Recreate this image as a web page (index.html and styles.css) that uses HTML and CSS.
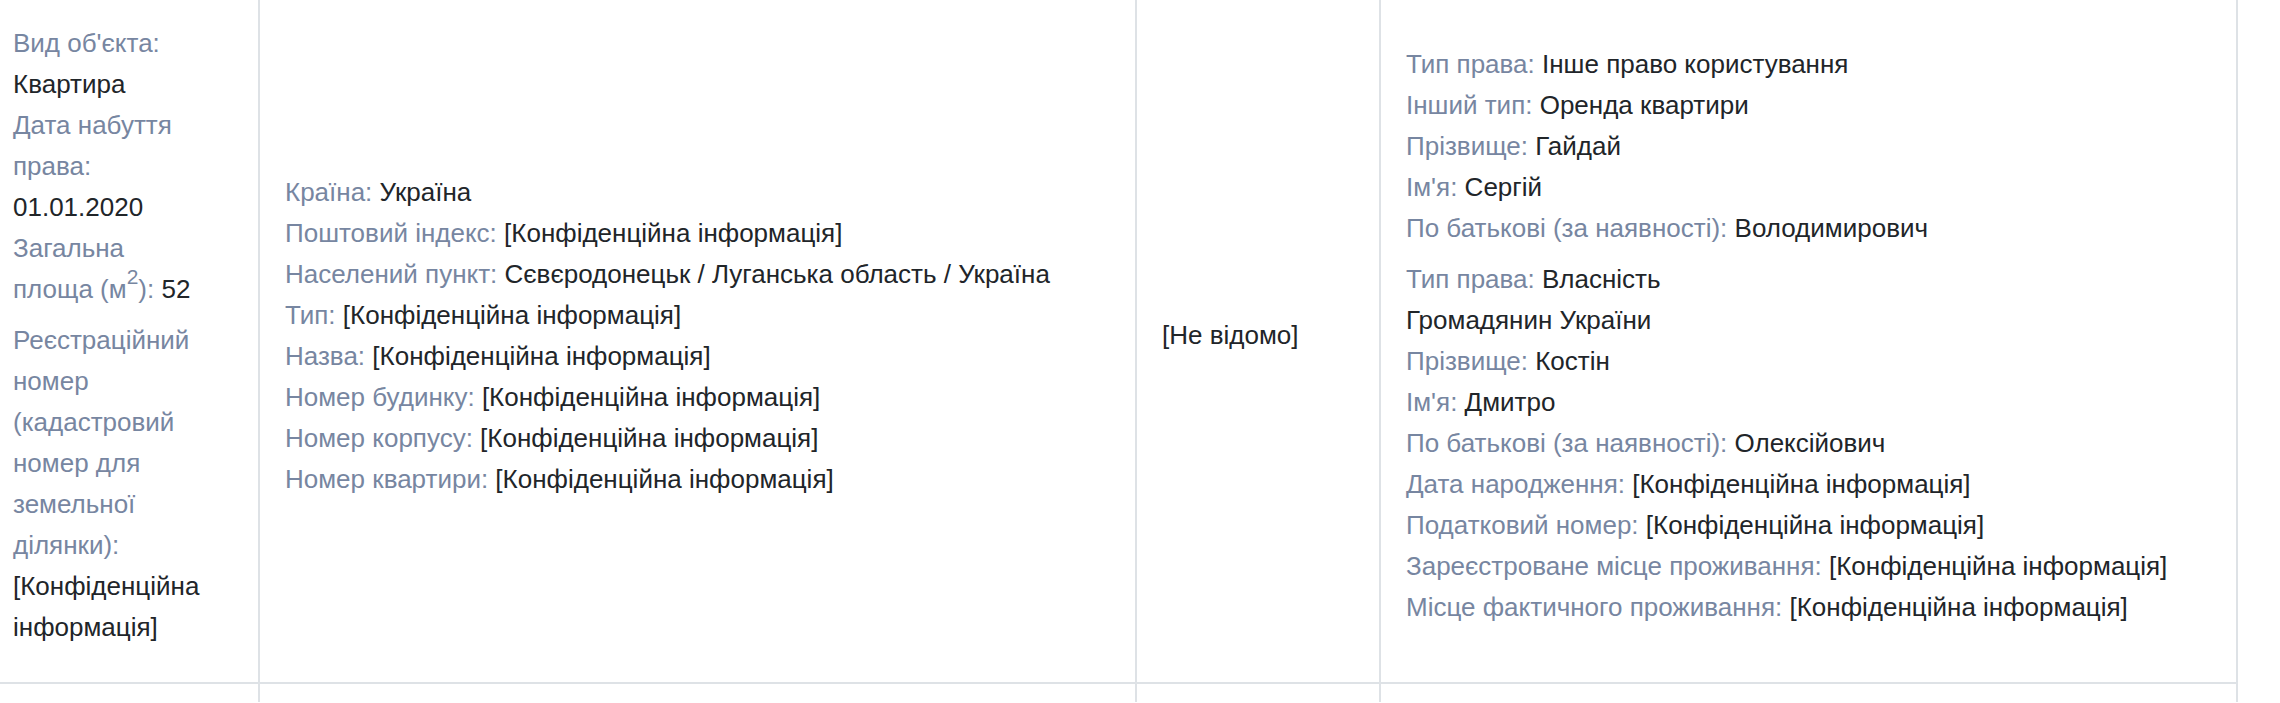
FILE: index.html
```html
<!DOCTYPE html>
<html lang="uk">
<head>
    <meta charset="UTF-8">
    <meta name="viewport" content="width=device-width, initial-scale=1.0">
    <title>Об'єкт нерухомості</title>
    <link rel="stylesheet" href="styles.css">
</head>
<body>
    <table class="record-table">
        <tr class="record-row">
            <td class="cell cell-object">
                <div class="object-info">
                    <div class="field-group">
                        <div><span class="label">Вид об'єкта:</span> Квартира</div>
                        <div><span class="label">Дата набуття права:</span> 01.01.2020</div>
                        <div><span class="label">Загальна площа (м<sup>2</sup>):</span> 52</div>
                    </div>
                    <div class="field-group">
                        <div><span class="label">Реєстраційний номер (кадастровий номер для земельної ділянки):</span> [Конфіденційна інформація]</div>
                    </div>
                </div>
            </td>
            <td class="cell cell-address">
                <div class="field-group">
                    <div><span class="label">Країна:</span> Україна</div>
                    <div><span class="label">Поштовий індекс:</span> [Конфіденційна інформація]</div>
                    <div><span class="label">Населений пункт:</span> Сєвєродонецьк / Луганська область / Україна</div>
                    <div><span class="label">Тип:</span> [Конфіденційна інформація]</div>
                    <div><span class="label">Назва:</span> [Конфіденційна інформація]</div>
                    <div><span class="label">Номер будинку:</span> [Конфіденційна інформація]</div>
                    <div><span class="label">Номер корпусу:</span> [Конфіденційна інформація]</div>
                    <div><span class="label">Номер квартири:</span> [Конфіденційна інформація]</div>
                </div>
            </td>
            <td class="cell cell-cost">[Не відомо]</td>
            <td class="cell cell-owners">
                <div class="field-group">
                    <div><span class="label">Тип права:</span> Інше право користування</div>
                    <div><span class="label">Інший тип:</span> Оренда квартири</div>
                    <div><span class="label">Прізвище:</span> Гайдай</div>
                    <div><span class="label">Ім'я:</span> Сергій</div>
                    <div><span class="label">По батькові (за наявності):</span> Володимирович</div>
                </div>
                <div class="field-group">
                    <div><span class="label">Тип права:</span> Власність</div>
                    <div>Громадянин України</div>
                    <div><span class="label">Прізвище:</span> Костін</div>
                    <div><span class="label">Ім'я:</span> Дмитро</div>
                    <div><span class="label">По батькові (за наявності):</span> Олексійович</div>
                    <div><span class="label">Дата народження:</span> [Конфіденційна інформація]</div>
                    <div><span class="label">Податковий номер:</span> [Конфіденційна інформація]</div>
                    <div><span class="label">Зареєстроване місце проживання:</span> [Конфіденційна інформація]</div>
                    <div><span class="label">Місце фактичного проживання:</span> [Конфіденційна інформація]</div>
                </div>
            </td>
        </tr>
        <tr class="record-row">
            <td class="cell cell-object"></td>
            <td class="cell cell-address"></td>
            <td class="cell cell-cost"></td>
            <td class="cell cell-owners"></td>
        </tr>
    </table>
</body>
</html>
```

FILE: styles.css
```css
body {
    margin: 0;
    font-family: "Liberation Sans", Arial, sans-serif;
    font-size: 26px;
    line-height: 41px;
    color: #212529;
    background-color: #fff;
}
.record-table {
    border-collapse: separate;
    border-spacing: 0;
    table-layout: fixed;
    width: 2238px;
}
.cell {
    box-sizing: border-box;
    vertical-align: middle;
    padding: 23px 25px 34px;
    border-right: 2px solid #dee2e6;
    border-bottom: 2px solid #dee2e6;
}
.record-row + .record-row .cell {
    height: 18px;
    padding: 0;
    border-bottom: none;
}
.cell-object {
    width: 260px;
    padding-left: 13px;
}
.cell-address {
    width: 877px;
}
.cell-cost {
    width: 244px;
}
.cell-owners {
    width: 857px;
}
.object-info {
    width: 194px;
}
.field-group + .field-group {
    margin-top: 10px;
}
.label {
    color: #7786a1;
}
sup {
    font-size: 21px;
    line-height: 0;
    vertical-align: 14px;
}
```
